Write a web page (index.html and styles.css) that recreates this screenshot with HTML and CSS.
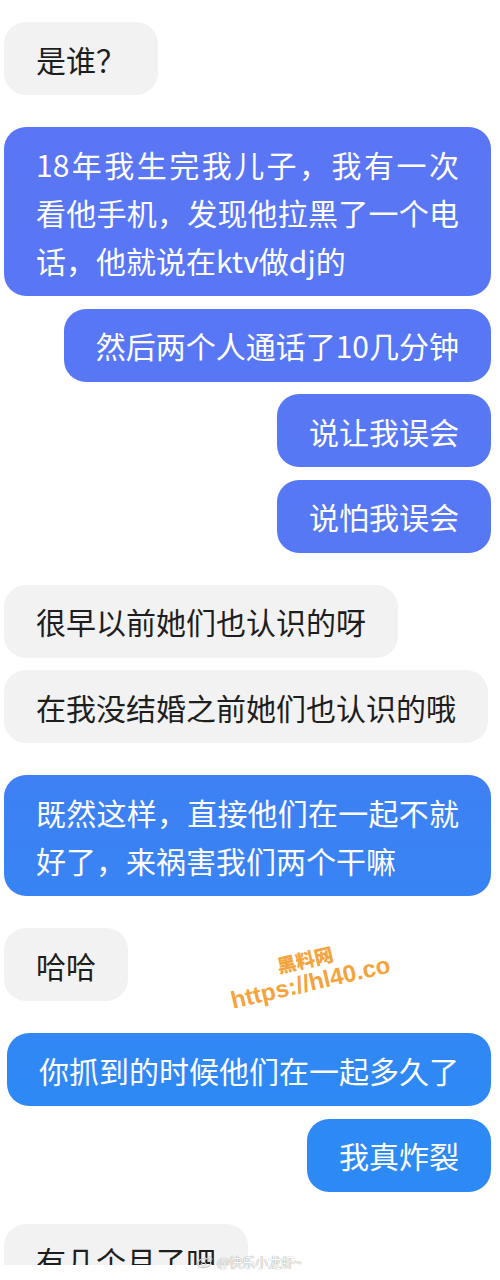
FILE: index.html
```html
<!DOCTYPE html>
<html lang="zh-CN">
<head>
<meta charset="utf-8">
<title>聊天记录</title>
<link rel="stylesheet" href="styles.css">
</head>
<body>
<div class="screen">
  <div class="chat">
    <div class="group left">
      <div class="bubble in">是谁？</div>
    </div>
    <div class="group right">
      <div class="bubble out">18年我生完我儿子，我有一次看他手机，发现他拉黑了一个电话，他就说在ktv做dj的</div>
      <div class="bubble out">然后两个人通话了10几分钟</div>
      <div class="bubble out">说让我误会</div>
      <div class="bubble out">说怕我误会</div>
    </div>
    <div class="group left">
      <div class="bubble in">很早以前她们也认识的呀</div>
      <div class="bubble in">在我没结婚之前她们也认识的哦</div>
    </div>
    <div class="group right">
      <div class="bubble out">既然这样，直接他们在一起不就好了，来祸害我们两个干嘛</div>
    </div>
    <div class="group left">
      <div class="bubble in">哈哈</div>
    </div>
    <div class="group right">
      <div class="bubble out">你抓到的时候他们在一起多久了</div>
      <div class="bubble out">我真炸裂</div>
    </div>
    <div class="group left">
      <div class="bubble in">有几个月了吧</div>
    </div>
    <div class="watermark">
      <div class="wm-name">黑料网</div>
      <div class="wm-url">https://hl40.co</div>
    </div>
  </div>
  <div class="footer">
    <div class="weibo">
      <svg class="weibo-logo" width="18" height="14" viewBox="0 0 18 14">
        <path d="M7.5 3.5C4 4.2 1.2 6.8 1.5 9.2c.3 2.4 3.7 3.8 7.3 3.3 3.7-.5 6.3-2.6 6-4.8-.2-1.3-1.3-1.7-2.2-1.9.4-1 .3-2-.6-2.2-.9-.2-2.3.4-2.3.4s.3-1.1-.3-1.1C9 2.9 8.2 3.3 7.5 3.5z" fill="none" stroke="#c9c9c9" stroke-width="1.2"/>
        <ellipse cx="7.6" cy="9.3" rx="2.6" ry="1.9" fill="none" stroke="#c9c9c9" stroke-width="1"/>
        <path d="M12.5 1.2c1.8.2 3.4 1.6 3.6 3.4M12.6 3c.9.1 1.6.8 1.7 1.6" fill="none" stroke="#c9c9c9" stroke-width="1"/>
      </svg>
      <span class="weibo-name">@快乐小龙虾~</span>
    </div>
  </div>
</div>
</body>
</html>
```

FILE: styles.css
```css
html, body {
  margin: 0;
  padding: 0;
  background: #ffffff;
}

.screen {
  width: 500px;
  height: 1280px;
  overflow: hidden;
  background: #ffffff;
}

.chat {
  position: relative;
  box-sizing: border-box;
  height: 1265px;
  overflow: hidden;
  padding: 22px 9px 0 4px;
  display: flex;
  flex-direction: column;
  gap: 32px;
}

.group {
  display: flex;
  flex-direction: column;
  gap: 12.5px;
}

.group.left {
  align-items: flex-start;
}

.group.right {
  align-items: flex-end;
}

.bubble {
  box-sizing: border-box;
  max-width: 487px;
  padding: 12.5px 32px;
  border-radius: 22px;
  font-family: "Noto Sans CJK SC", "Noto Sans", sans-serif;
  font-size: 30px;
  line-height: 48px;
  text-align: justify;
  word-break: break-all;
}

.bubble.in {
  background: #f2f2f3;
  color: #1e1e1e;
}

.bubble.out {
  color: #ffffff;
  background-color: #4a7ef4;
  background-image: linear-gradient(to bottom, #5b75f5 0px, #5678f5 560px, #3d81f4 790px, #2e89f5 1100px, #2c8af5 1280px);
  background-attachment: fixed;
}

.watermark {
  position: absolute;
  left: 222px;
  top: 948px;
  width: 172px;
  text-align: center;
  color: #f4a33d;
  transform: rotate(-13deg);
  font-weight: bold;
  line-height: 22px;
}

.wm-name {
  font-family: "Noto Sans CJK SC", sans-serif;
  font-size: 19px;
  font-weight: 900;
}

.wm-url {
  font-family: "Liberation Sans", Arial, sans-serif;
  font-size: 24px;
  font-weight: bold;
  line-height: 26px;
}

.footer {
  position: relative;
  height: 15px;
  background: #ffffff;
}

.weibo {
  position: absolute;
  left: 196px;
  top: -12px;
  display: flex;
  align-items: center;
  gap: 3px;
}

.weibo-name {
  font-family: "Noto Sans CJK SC", sans-serif;
  font-size: 13px;
  line-height: 18px;
  color: #ffffff;
  text-shadow: 0 0 1px #9a9a9a, 0 0 1px #9a9a9a;
}
```
